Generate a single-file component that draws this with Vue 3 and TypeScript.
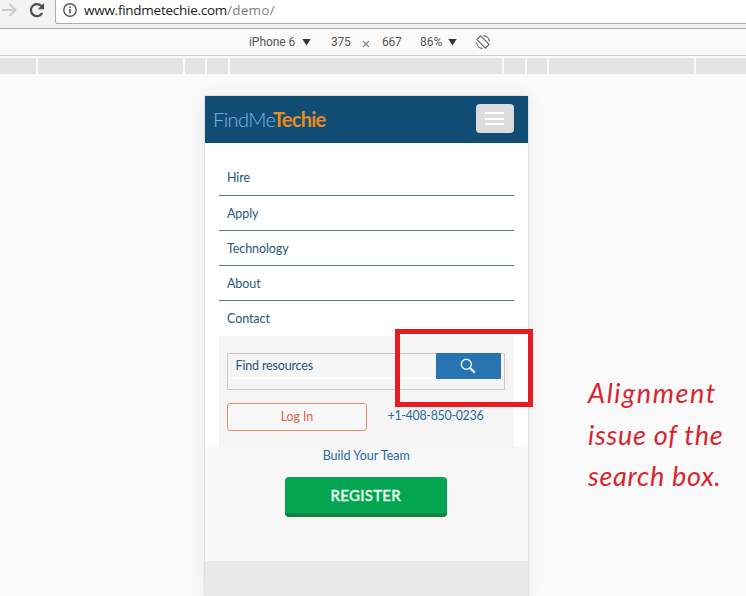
<script setup lang="ts">
interface NavItem { label: string; key: string }

const navItems: NavItem[] = [
  { label: 'Hire', key: 'hire' },
  { label: 'Apply', key: 'apply' },
  { label: 'Technology', key: 'technology' },
  { label: 'About', key: 'about' },
  { label: 'Contact', key: 'contact' },
]

// widths of the breakpoint segments in the ruler
const segments: number[] = [36, 145, 20, 21, 272, 21, 20, 145, 50]
</script>

<template>
  <div class="screen">
    <header class="browser">
      <svg class="forward" viewBox="0 0 16 16" width="16" height="16">
        <path d="M1 8H14M8.5 2L14.5 8L8.5 14" fill="none" stroke="#cbcbcb" stroke-width="2" />
      </svg>
      <svg class="reload" viewBox="0 0 16 16" width="16" height="16">
        <path d="M13.2 11A6 6 0 1 1 12.4 4.1" fill="none" stroke="#4d4d4d" stroke-width="2.2" />
        <path d="M15 1V7.2H8.8Z" fill="#4d4d4d" />
      </svg>
      <div class="address">
        <svg class="info" viewBox="0 0 14 14" width="14" height="14">
          <circle cx="7" cy="7" r="6.2" fill="none" stroke="#555" stroke-width="1.4" />
          <path d="M7 6V10.4M7 3.4V5" stroke="#555" stroke-width="1.6" />
        </svg>
        <span class="url">www.findmetechie.com<span class="path">/demo/</span></span>
      </div>
    </header>

    <div class="device-bar">
      <span class="device">iPhone 6</span>
      <i class="caret"></i>
      <span class="w">375</span>
      <svg class="times" viewBox="0 0 8 8" width="8" height="8">
        <path d="M1 1L7 7M7 1L1 7" stroke="#888" stroke-width="1.3" />
      </svg>
      <span class="h">667</span>
      <span class="zoom">86%</span>
      <i class="caret"></i>
      <svg class="rotate" viewBox="0 0 14 14" width="14" height="14" fill="none" stroke="#666" stroke-width="1.1">
        <path d="M.9 4.6L4.6 .9L13.1 9.4L9.4 13.1Z" />
        <path d="M7.5 .6A6.3 6.3 0 0 1 13.4 6.5M.6 7.5A6.3 6.3 0 0 0 6.5 13.4" />
      </svg>
    </div>

    <div class="ruler">
      <span v-for="(w, i) in segments" :key="i" class="segment" :style="{ width: w + 'px' }"></span>
    </div>

    <main class="stage">
      <section class="phone">
        <div class="brand-bar">
          <div class="brand"><span class="thin">FindMe</span><span class="bold">Techie</span></div>
          <button class="menu" aria-label="Menu"><i></i><i></i><i></i></button>
        </div>
        <div class="menu-panel">
          <nav>
            <a v-for="item in navItems" :key="item.key" :class="item.key"><span>{{ item.label }}</span></a>
          </nav>
          <div class="tools">
            <div class="search">
              <div class="field">Find resources</div>
              <button class="go" aria-label="Search">
                <svg viewBox="0 0 16 16" width="16" height="16" fill="none" stroke="#e9f5ff">
                  <circle cx="6.3" cy="6.3" r="5" stroke-width="1.4" />
                  <path d="M9.9 9.9L14.8 14.6" stroke-width="2.2" />
                </svg>
              </button>
            </div>
            <div class="contact-row">
              <button class="login">Log In</button>
              <span class="phone-number">+1-408-850-0236</span>
            </div>
          </div>
        </div>
        <div class="hero">
          <a class="build">Build Your Team</a>
          <button class="register">REGISTER</button>
        </div>
        <div class="below"></div>
      </section>
      <div class="highlight"></div>
      <p class="note">
        <span class="l1">Alignment</span>
        <span class="l2">issue of the</span>
        <span class="l3">search box.</span>
      </p>
    </main>
  </div>
</template>

<style>
body { margin: 0; overflow: hidden; }
</style>

<style scoped>
* { box-sizing: border-box; }
button { padding: 0; font-family: inherit; }
svg { display: block; flex: none; }
.screen {
  width: 746px; height: 596px; overflow: hidden; display: flex; flex-direction: column;
  background: #fafafa; font-family: Lato, "Liberation Sans", sans-serif;
}
.browser {
  height: 29px; flex: none; display: flex; background: #f2f2f2; border-bottom: 1px solid #acacac;
}
.forward { margin: 2px 0 0 1px; }
.reload { margin: 2px 0 0 12px; }
.address {
  margin-left: 10px; width: 700px; flex: none; height: 24px; display: flex; background: #fff;
  border: 1px solid #adadad; border-top: 0; border-radius: 0 0 0 3px;
}
.info { margin: 3px 0 0 7px; }
.url {
  margin-left: 7px; font: 13.5px/20px "Open Sans", sans-serif; color: #222; letter-spacing: -.26px;
  white-space: nowrap;
}
.path { color: #808080; letter-spacing: .25px; }

.device-bar {
  height: 27px; flex: none; display: flex; align-items: center; border-bottom: 1px solid #ccc;
  padding-left: 249px; font: 12px/26px Roboto, sans-serif; color: #555; white-space: nowrap;
}
.device { width: 53px; letter-spacing: -.05px; }
.caret { width: 9px; height: 7px; background: #333; clip-path: polygon(0 0, 100% 0, 50% 100%); }
.w { margin-left: 20px; width: 20px; letter-spacing: -.2px; }
.times { margin: 3px 0 0 11px; }
.h { margin-left: 12px; width: 20px; letter-spacing: -.2px; }
.zoom { margin-left: 18px; width: 28px; }
.rotate { margin-left: 19px; }

.ruler { height: 18px; flex: none; display: flex; gap: 2px; padding: 2px 0 0; }
.segment { flex: none; height: 16px; background: #e4e4e4; }

.stage { position: relative; flex: 1; padding: 22px 0 0 205px; }
.phone {
  width: 322.5px; height: 500px; display: flex; flex-direction: column; background: #fff;
  box-shadow: 0 0 2px rgba(0, 0, 0, .22), 0 0 18px rgba(0, 0, 0, .07);
}
.brand-bar {
  height: 47px; flex: none; display: flex; justify-content: space-between; padding: 8px 13.5px 0 8px;
  background: #114d75;
}
.brand { display: flex; font-size: 20px; line-height: 30px; white-space: nowrap; }
.thin { width: 60px; color: #7fb8e2; font-weight: 300; letter-spacing: -.55px; }
.bold { color: #e98a1c; font-weight: 700; letter-spacing: -.75px; }
.menu {
  width: 38px; height: 29px; border: 0; border-radius: 4px; background: #dcdcdc;
  display: flex; flex-direction: column; align-items: center; gap: 3.5px; padding: 8px 1px 0 0;
}
.menu i { width: 19px; height: 2px; background: #fff; flex: none; }

.menu-panel { height: 304px; flex: none; padding: 17px 13.5px 0 14px; }
nav { display: flex; flex-direction: column; }
nav a {
  height: 35.25px; border-bottom: 1px solid #4f7692; padding: 0 0 0 8px; font-size: 12.5px;
  line-height: 35px; color: #28577a; letter-spacing: -.08px;
}
nav a:first-child { height: 36px; }
nav a:nth-child(3) { height: 34.75px; }
nav a:last-child { border-bottom: 0; height: 34.75px; line-height: 36px; }
.tools { height: 111px; padding: 17px 9px 0 8px; background: #f5f5f5; }
.search {
  width: 278px; height: 37px; border: 1px solid #c9c9c9; display: flex; align-items: flex-start;
}
.field {
  width: 208px; height: 25px; border-bottom: 2px solid #fff; padding-left: 7.5px;
  font-size: 12.5px; line-height: 24px; color: #28577a; letter-spacing: -.16px;
}
.go {
  width: 64.5px; height: 26px; margin-top: -1px; border: 0; border-radius: 1px; background: #2874b2;
  display: flex; align-items: center; justify-content: center;
}
.contact-row { display: flex; margin-top: 13px; white-space: nowrap; }
.login {
  width: 140px; height: 28px; border: 1px solid #e98e70; border-radius: 3px; background: #f8f8f8;
  color: #e1633e; font-size: 12.5px; line-height: 24px; letter-spacing: -.1px;
}
.phone-number {
  margin-left: 20.5px; font-size: 12.5px; line-height: 26px; color: #2b69a0; letter-spacing: -.34px;
}

.hero {
  height: 114px; flex: none; display: flex; flex-direction: column; align-items: center;
  background: #f7f7f7;
}
.build { font-size: 12.5px; line-height: 17px; color: #2b69a0; }
.register {
  margin: 13px 1px 0 0; width: 162.5px; height: 40px; border: 0; border-bottom: 4px solid #0a8642;
  border-radius: 4px; background: #04a551; color: #eafff1; font-size: 15px; font-weight: 500;
  line-height: 35px; -webkit-text-stroke: .35px #eafff1; letter-spacing: .3px;
}
.below { flex: 1; background: #e9e9e9; }

.highlight {
  position: absolute; left: 395px; top: 255px; width: 138px; height: 78px; border: 5px solid #e81b23;
}
.note {
  position: absolute; left: 588px; top: 298px; margin: 0; display: flex; flex-direction: column;
  font-size: 27px; font-style: italic; line-height: 41.5px; color: #d8252d; white-space: nowrap;
}
.l1 { letter-spacing: 1.6px; }
.l2 { letter-spacing: .75px; }
.l3 { letter-spacing: .7px; }
</style>
